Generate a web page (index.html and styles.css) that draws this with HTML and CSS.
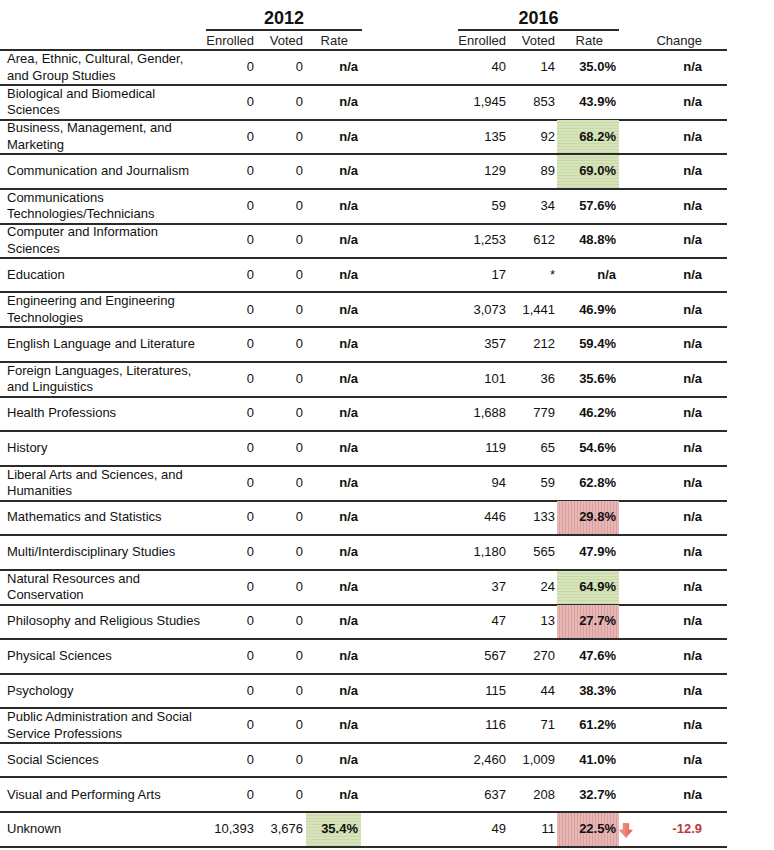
FILE: index.html
```html
<!DOCTYPE html>
<html>
<head>
<meta charset="utf-8">
<link rel="stylesheet" href="styles.css">
</head>
<body>
<div class="table">
  <div class="row head1">
    <div class="c"></div>
    <div class="c year y12">2012</div>
    <div class="c"></div>
    <div class="c year y16">2016</div>
    <div class="c"></div>
  </div>
  <div class="row head2">
    <div class="c"></div>
    <div class="c h en">Enrolled</div>
    <div class="c h vo">Voted</div>
    <div class="c h r12">Rate</div>
    <div class="c"></div>
    <div class="c h en">Enrolled</div>
    <div class="c h vo2">Voted</div>
    <div class="c h r16">Rate</div>
    <div class="c h ch">Change</div>
  </div>

  <div class="row"><div class="c name">Area, Ethnic, Cultural, Gender,<br>and Group Studies</div><div class="c n en">0</div><div class="c n vo">0</div><div class="c n b r12">n/a</div><div class="c"></div><div class="c n en">40</div><div class="c n vo2">14</div><div class="c n b r16">35.0%</div><div class="c n b ch">n/a</div></div>
  <div class="row"><div class="c name">Biological and Biomedical<br>Sciences</div><div class="c n en">0</div><div class="c n vo">0</div><div class="c n b r12">n/a</div><div class="c"></div><div class="c n en">1,945</div><div class="c n vo2">853</div><div class="c n b r16">43.9%</div><div class="c n b ch">n/a</div></div>
  <div class="row"><div class="c name">Business, Management, and<br>Marketing</div><div class="c n en">0</div><div class="c n vo">0</div><div class="c n b r12">n/a</div><div class="c"></div><div class="c n en">135</div><div class="c n vo2">92</div><div class="c n b r16 good">68.2%</div><div class="c n b ch">n/a</div></div>
  <div class="row"><div class="c name">Communication and Journalism</div><div class="c n en">0</div><div class="c n vo">0</div><div class="c n b r12">n/a</div><div class="c"></div><div class="c n en">129</div><div class="c n vo2">89</div><div class="c n b r16 good">69.0%</div><div class="c n b ch">n/a</div></div>
  <div class="row"><div class="c name">Communications<br>Technologies/Technicians</div><div class="c n en">0</div><div class="c n vo">0</div><div class="c n b r12">n/a</div><div class="c"></div><div class="c n en">59</div><div class="c n vo2">34</div><div class="c n b r16">57.6%</div><div class="c n b ch">n/a</div></div>
  <div class="row"><div class="c name">Computer and Information<br>Sciences</div><div class="c n en">0</div><div class="c n vo">0</div><div class="c n b r12">n/a</div><div class="c"></div><div class="c n en">1,253</div><div class="c n vo2">612</div><div class="c n b r16">48.8%</div><div class="c n b ch">n/a</div></div>
  <div class="row"><div class="c name">Education</div><div class="c n en">0</div><div class="c n vo">0</div><div class="c n b r12">n/a</div><div class="c"></div><div class="c n en">17</div><div class="c n vo2">*</div><div class="c n b r16">n/a</div><div class="c n b ch">n/a</div></div>
  <div class="row"><div class="c name">Engineering and Engineering<br>Technologies</div><div class="c n en">0</div><div class="c n vo">0</div><div class="c n b r12">n/a</div><div class="c"></div><div class="c n en">3,073</div><div class="c n vo2">1,441</div><div class="c n b r16">46.9%</div><div class="c n b ch">n/a</div></div>
  <div class="row"><div class="c name">English Language and Literature</div><div class="c n en">0</div><div class="c n vo">0</div><div class="c n b r12">n/a</div><div class="c"></div><div class="c n en">357</div><div class="c n vo2">212</div><div class="c n b r16">59.4%</div><div class="c n b ch">n/a</div></div>
  <div class="row"><div class="c name">Foreign Languages, Literatures,<br>and Linguistics</div><div class="c n en">0</div><div class="c n vo">0</div><div class="c n b r12">n/a</div><div class="c"></div><div class="c n en">101</div><div class="c n vo2">36</div><div class="c n b r16">35.6%</div><div class="c n b ch">n/a</div></div>
  <div class="row"><div class="c name">Health Professions</div><div class="c n en">0</div><div class="c n vo">0</div><div class="c n b r12">n/a</div><div class="c"></div><div class="c n en">1,688</div><div class="c n vo2">779</div><div class="c n b r16">46.2%</div><div class="c n b ch">n/a</div></div>
  <div class="row"><div class="c name">History</div><div class="c n en">0</div><div class="c n vo">0</div><div class="c n b r12">n/a</div><div class="c"></div><div class="c n en">119</div><div class="c n vo2">65</div><div class="c n b r16">54.6%</div><div class="c n b ch">n/a</div></div>
  <div class="row"><div class="c name">Liberal Arts and Sciences, and<br>Humanities</div><div class="c n en">0</div><div class="c n vo">0</div><div class="c n b r12">n/a</div><div class="c"></div><div class="c n en">94</div><div class="c n vo2">59</div><div class="c n b r16">62.8%</div><div class="c n b ch">n/a</div></div>
  <div class="row"><div class="c name">Mathematics and Statistics</div><div class="c n en">0</div><div class="c n vo">0</div><div class="c n b r12">n/a</div><div class="c"></div><div class="c n en">446</div><div class="c n vo2">133</div><div class="c n b r16 bad">29.8%</div><div class="c n b ch">n/a</div></div>
  <div class="row"><div class="c name">Multi/Interdisciplinary Studies</div><div class="c n en">0</div><div class="c n vo">0</div><div class="c n b r12">n/a</div><div class="c"></div><div class="c n en">1,180</div><div class="c n vo2">565</div><div class="c n b r16">47.9%</div><div class="c n b ch">n/a</div></div>
  <div class="row"><div class="c name">Natural Resources and<br>Conservation</div><div class="c n en">0</div><div class="c n vo">0</div><div class="c n b r12">n/a</div><div class="c"></div><div class="c n en">37</div><div class="c n vo2">24</div><div class="c n b r16 good">64.9%</div><div class="c n b ch">n/a</div></div>
  <div class="row"><div class="c name">Philosophy and Religious Studies</div><div class="c n en">0</div><div class="c n vo">0</div><div class="c n b r12">n/a</div><div class="c"></div><div class="c n en">47</div><div class="c n vo2">13</div><div class="c n b r16 bad">27.7%</div><div class="c n b ch">n/a</div></div>
  <div class="row"><div class="c name">Physical Sciences</div><div class="c n en">0</div><div class="c n vo">0</div><div class="c n b r12">n/a</div><div class="c"></div><div class="c n en">567</div><div class="c n vo2">270</div><div class="c n b r16">47.6%</div><div class="c n b ch">n/a</div></div>
  <div class="row"><div class="c name">Psychology</div><div class="c n en">0</div><div class="c n vo">0</div><div class="c n b r12">n/a</div><div class="c"></div><div class="c n en">115</div><div class="c n vo2">44</div><div class="c n b r16">38.3%</div><div class="c n b ch">n/a</div></div>
  <div class="row"><div class="c name">Public Administration and Social<br>Service Professions</div><div class="c n en">0</div><div class="c n vo">0</div><div class="c n b r12">n/a</div><div class="c"></div><div class="c n en">116</div><div class="c n vo2">71</div><div class="c n b r16">61.2%</div><div class="c n b ch">n/a</div></div>
  <div class="row"><div class="c name">Social Sciences</div><div class="c n en">0</div><div class="c n vo">0</div><div class="c n b r12">n/a</div><div class="c"></div><div class="c n en">2,460</div><div class="c n vo2">1,009</div><div class="c n b r16">41.0%</div><div class="c n b ch">n/a</div></div>
  <div class="row"><div class="c name">Visual and Performing Arts</div><div class="c n en">0</div><div class="c n vo">0</div><div class="c n b r12">n/a</div><div class="c"></div><div class="c n en">637</div><div class="c n vo2">208</div><div class="c n b r16">32.7%</div><div class="c n b ch">n/a</div></div>
  <div class="row"><div class="c name">Unknown</div><div class="c n en">10,393</div><div class="c n vo">3,676</div><div class="c n b r12 good">35.4%</div><div class="c"></div><div class="c n en">49</div><div class="c n vo2">11</div><div class="c n b r16 bad">22.5%</div><div class="c n b ch split"><svg class="arrow" width="14" height="15" viewBox="0 0 14 15"><defs><linearGradient id="ag" x1="0" y1="0" x2="1" y2="0"><stop offset="0" stop-color="#f3a193"/><stop offset="1" stop-color="#de5f52"/></linearGradient></defs><path d="M4.2 0.5 H9.8 V7 H13.5 L7 14.5 L0.5 7 H4.2 Z" fill="url(#ag)" stroke="#d8675b" stroke-width="0.6"/></svg><span class="neg">-12.9</span></div></div>
</div>
</body>
</html>
```

FILE: styles.css
```css
html, body {
  margin: 0;
  padding: 0;
  background: #ffffff;
}
body {
  font-family: "Liberation Sans", Arial, sans-serif;
  font-size: 13px;
  color: #111111;
}
.table {
  width: 727px;
}
.row {
  display: grid;
  grid-template-columns: 205px 51px 50px 55px 97px 50px 49px 62px 108px;
  height: 34.65px;
}
.c {
  box-sizing: border-box;
  border-bottom: 2px solid #2b2b2b;
  display: flex;
  align-items: center;
  line-height: 16.5px;
}
.head1 {
  grid-template-columns: 206px 156px 96px 161px 108px;
  height: 31px;
}
.head1 .c {
  border-bottom: none;
}
.head1 .year {
  border-bottom: 2px solid #2b2b2b;
  justify-content: center;
  align-items: flex-end;
  font-size: 18px;
  font-weight: bold;
  line-height: 18px;
  padding-bottom: 2px;
  color: #111;
}
.head2 {
  height: 20px;
}
.head2 .c {
  line-height: 15px;
  padding-top: 1px;
  color: #222;
}
.h {
  justify-content: flex-end;
}
.name {
  padding-left: 7px;
  line-height: 16.5px;
}
.n {
  justify-content: flex-end;
}
.b {
  font-weight: bold;
}
.en { padding-right: 2px; justify-content: flex-end; }
.vo { padding-right: 3px; justify-content: flex-end; }
.vo2 { padding-right: 2px; justify-content: flex-end; }
.r12 { padding-right: 3px; justify-content: flex-end; }
.r16 { padding-right: 3px; justify-content: flex-end; }
.ch { padding-right: 25px; justify-content: flex-end; }
.head2 .r12 { padding-right: 13px; }
.head2 .r16 { padding-right: 16px; }

.good {
  background: repeating-linear-gradient(to bottom, #d7e4bb 0, #d7e4bb 2px, #c9d9a8 2px, #c9d9a8 3px);
}
.bad {
  background: repeating-linear-gradient(to right, #e7b6b5 0, #e7b6b5 2px, #d9a2a1 2px, #d9a2a1 3px);
}
.split {
  justify-content: space-between;
  padding-left: 0;
}
.arrow {
  display: block;
  margin-top: 2px;
}
.neg {
  color: #c0363a;
}
```
